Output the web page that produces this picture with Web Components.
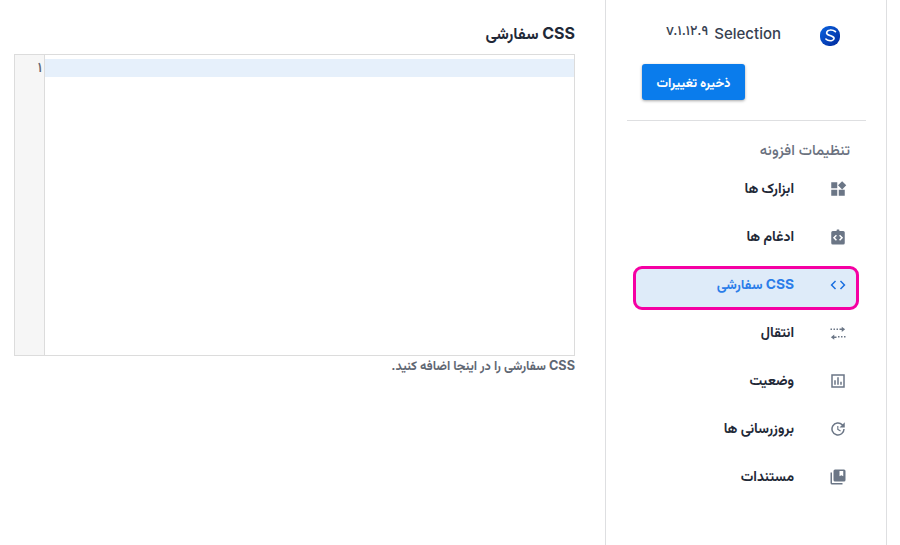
<!DOCTYPE html>
<html lang="fa" dir="rtl">
<head>
<meta charset="utf-8">
<style>
html,body{margin:0;padding:0;height:100%;background:#fff;overflow:hidden}
body{font-family:Inter,"Vazirmatn","Noto Sans Arabic","DejaVu Sans",sans-serif;color:#1f2937}
</style>
</head>
<body>
<app-shell>
  <side-bar slot="side">
    <plugin-head name="Selection" version="v.۱.۱۲.۹"></plugin-head>
    <save-button>ذخیره تغییرات</save-button>
    <section-title>تنظیمات افزونه</section-title>
    <nav-item icon="widgets">ابزارک ها</nav-item>
    <nav-item icon="integrate">ادغام ها</nav-item>
    <nav-item icon="code" active>CSS سفارشی</nav-item>
    <nav-item icon="transfer">انتقال</nav-item>
    <nav-item icon="status">وضعیت</nav-item>
    <nav-item icon="update">بروزرسانی ها</nav-item>
    <nav-item icon="docs">مستندات</nav-item>
  </side-bar>
  <css-panel slot="main" heading="CSS سفارشی" hint="CSS سفارشی را در اینجا اضافه کنید."></css-panel>
</app-shell>
<script>
const def=(name,css,html)=>customElements.define(name,class extends HTMLElement{
  connectedCallback(){
    if(this.shadowRoot)return;
    const r=this.attachShadow({mode:'open'});
    r.innerHTML=`<style>${css}</style>`+(typeof html==='function'?html(this):html);
  }
});
const ICONS={
 widgets:'<path d="M3 3h8v8H3zM3 13h8v8H3zM13 13h8v8h-8zM17.500 1.500l5.500 5.500-5.500 5.500L12 7z"/>',
 integrate:'<path fill-rule="evenodd" d="M5 4h5l.5-2h3l.5 2h5a2 2 0 0 1 2 2v14a2 2 0 0 1-2 2H5a2 2 0 0 1-2-2V6a2 2 0 0 1 2-2zm5.600 11.600L8 13l2.600-2.600L9.200 9l-4 4 4 4zm2.800 0 1.400 1.400 4-4-4-4-1.400 1.400L16 13z"/>',
 code:'<path d="M9.400 16.600 4.800 12l4.600-4.600L8 6l-6 6 6 6zm5.200 0 4.600-4.600-4.600-4.600L16 6l6 6-6 6z"/>',
 transfer:'<path d="M14 6h3V3.500L21.500 7 17 10.500V8h-3zM2 6h2v2H2zM6 6h2v2H6zM10 6h2v2h-2zM10 14v2.500H7V14l-4.500 3.500L7 21v-2.500h3zM12 16h2v2h-2zM16 16h2v2h-2zM20 16h2v2h-2z"/>',
 status:'<path fill-rule="evenodd" d="M3 3h18v18H3zm2 2v14h14V5z"/><path d="M7 11h2v6H7zM11 7h2v10h-2zM15 13h2v4h-2z"/>',
 update:'<path d="M11 8v5l4 2.400.8-1.300-3.300-2V8zM21 10V3l-2.600 2.600A9 9 0 1 0 21 12h-2a7 7 0 1 1-2-4.900L14 10z"/>',
 docs:'<path d="M4 6H2v14a2 2 0 0 0 2 2h14v-2H4z"/><path fill-rule="evenodd" d="M20 2H8a2 2 0 0 0-2 2v12a2 2 0 0 0 2 2h12a2 2 0 0 0 2-2V4a2 2 0 0 0-2-2zm-1 9-2.500-1.500L14 11V4h5z"/>'
};
const FF='Inter,"Vazirmatn","Noto Sans Arabic","DejaVu Sans",sans-serif';
def('app-shell',`
 :host{display:flex;direction:rtl;height:545px;box-sizing:border-box;padding-right:13px;gap:30px;align-items:stretch}
 ::slotted([slot=side]){flex:none}
`,`<slot name="side"></slot><slot name="main"></slot>`);
def('side-bar',`
 :host{display:block;width:282px;box-sizing:border-box;border-left:1px solid #dedfe1;border-right:1px solid #dedfe1;padding:0 20px 0 21px}
`,`<slot></slot>`);
def('plugin-head',`
 :host{display:flex;align-items:center;height:64px;box-sizing:border-box;padding:8px 26px 0 0;gap:39px}
 svg{width:20px;height:20px;flex:none;margin-top:-1px}
 .t{display:flex;gap:6px;align-items:flex-start;direction:rtl;margin-top:-6px}
 .n{font-size:15px;font-weight:500;color:#374151;line-height:17px}
 .v{font-size:13.800px;font-weight:500;color:#374151;line-height:14px;margin-top:-2px;direction:ltr}
`,h=>`<svg viewBox="0 0 20 20"><defs><linearGradient id="g" x1="0" y1="0" x2="1" y2="1"><stop offset="0" stop-color="#0a63e0"/><stop offset="1" stop-color="#02299b"/></linearGradient></defs><rect x="0" y="0" width="20" height="20" rx="9" fill="url(#g)"/><path transform="translate(10 10) scale(1.350 1.150) translate(-10 -10)" d="M14 6.200c-1-1-2.600-1.700-4.200-1.400-1.900.3-3 2.400-1.700 3.800.7.700 1.800 1 2.900 1.400 1.200.5 2.200 1.200 1.900 2.500-.4 1.500-2.300 1.800-3.600 1.500-.8-.2-1.600-.7-2.300-1.400" fill="none" stroke="#fff" stroke-width="1.300" stroke-linecap="round"/></svg><div class="t"><span class="n">${h.getAttribute('name')}</span><span class="v">${h.getAttribute('version')}</span></div>`);
def('save-button',`
 :host{display:block;padding-right:121px;height:56px}
 button{all:unset;display:block;box-sizing:border-box;width:103px;height:36px;text-align:center;background:#0a7cec;color:#fff;border-radius:3px;font:700 12.800px/33px ${FF};box-shadow:0 1px 3px rgba(0,0,0,.35)}
`,`<button><slot></slot></button>`);
def('section-title',`
 :host{display:block;border-top:1px solid #dedfe1;padding:19px 16px 0 0;height:45px;box-sizing:border-box;font-size:14.900px;line-height:20px;color:#6b7280;font-weight:500}
`,`<slot></slot>`);
def('nav-item',`
 :host{display:flow-root;height:48px}
 .r{display:flex;align-items:center;height:48px;box-sizing:border-box;padding-right:19px;gap:35px;font-size:14px;font-weight:700;color:#1f2937}
 .r.a{height:44px;margin:5px 7px 0 6px;padding:0 9px 6px 0;border:3px solid #f500a3;border-radius:9px;background:#deebf9;color:#2b7de9;font-size:13.800px}
 svg{width:18px;height:18px;fill:#6b7686;flex:none}
 .a svg{fill:#1a6fe0}
 span{line-height:20px;margin-top:-2px}
`,h=>`<div class="r ${h.hasAttribute('active')?'a':''}"><svg viewBox="0 0 24 24">${ICONS[h.getAttribute('icon')]}</svg><span><slot></slot></span></div>`);
def('css-panel',`
 :host{display:block;width:561px;padding-top:23px;box-sizing:border-box}
 h2{margin:0 0 10px;font-size:16px;line-height:21px;font-weight:700;color:#1f2937}
 .e{display:flex;direction:ltr;height:302px;box-sizing:border-box;border:1px solid #dcdcdc}
 .g{width:30px;flex:none;box-sizing:border-box;background:#f6f6f6;border-right:1px solid #dcdcdc;padding:4px 2px 0 0;text-align:right;font-size:14px;font-weight:500;line-height:15px;color:#5f6773}
 .b{flex:1;padding-top:4px}
 .l{height:18px;background:#e6f0fb}
 p{margin:2px 0 0;font-size:12.700px;line-height:16px;font-weight:700;color:#5f6773}
`,h=>`<h2>${h.getAttribute('heading')}</h2><div class="e"><div class="g">۱</div><div class="b"><div class="l"></div></div></div><p>${h.getAttribute('hint')}</p>`);
</script>
</body>
</html>
